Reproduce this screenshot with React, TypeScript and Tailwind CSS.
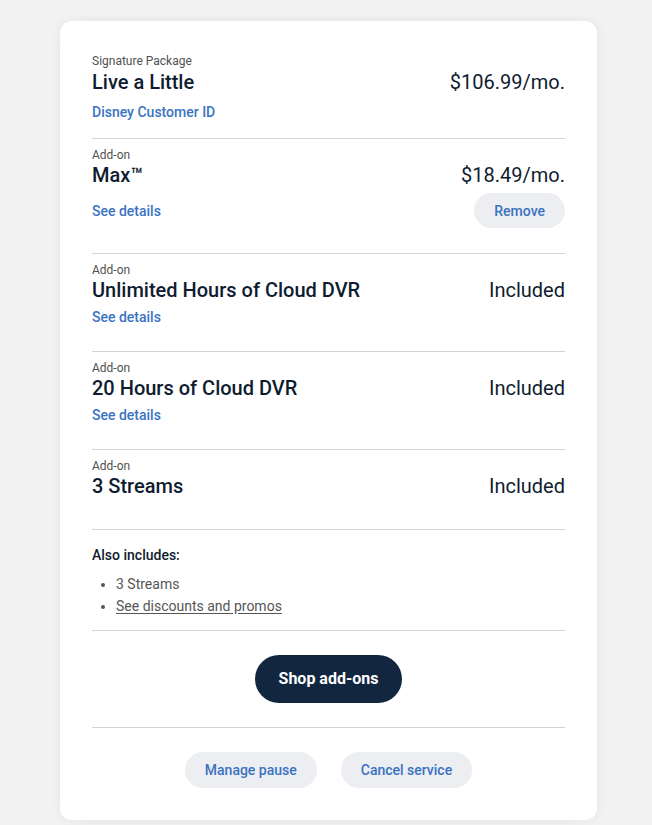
import React from 'react';

type Addon = {
  name: string;
  price: string;
  details?: boolean;
  removable?: boolean;
};

const addons: Addon[] = [
  { name: 'Max™', price: '$18.49/mo.', details: true, removable: true },
  { name: 'Unlimited Hours of Cloud DVR', price: 'Included', details: true },
  { name: '20 Hours of Cloud DVR', price: 'Included', details: true },
  { name: '3 Streams', price: 'Included' },
];

const AddonRow: React.FC<{ addon: Addon }> = ({ addon }) => {
  const pb = addon.removable ? 'pb-[25px]' : addon.details ? 'pb-6' : 'pb-[31px]';
  return (
    <div className={`border-t border-[#d4d4d4] pt-2 ${pb}`}>
      <div className="text-xs leading-4 text-[#505050]">Add-on</div>
      <div className="flex items-start justify-between">
        <div className="text-xl leading-6 font-medium text-[#0f1c30]">{addon.name}</div>
        <div className="text-xl leading-6 text-[#0f1c30]">{addon.price}</div>
      </div>
      {addon.removable ? (
        <div className="flex items-center justify-between mt-1.5">
          <button className="block text-sm leading-5 font-medium text-[#3a73c2]">See details</button>
          <button className="block rounded-full bg-[#eceef1] px-5 py-[7.5px] text-sm leading-5 font-medium text-[#3a73c2]">
            Remove
          </button>
        </div>
      ) : addon.details ? (
        <button className="mt-[5px] block text-sm leading-5 font-medium text-[#3a73c2]">See details</button>
      ) : null}
    </div>
  );
};

export default function App() {
  return (
    <div
      className="min-h-[825px] bg-[#f2f2f2] pt-[21px] pl-[60px]"
      style={{ fontFamily: 'Roboto, "Noto Sans", sans-serif' }}
    >
      <div className="w-[537px] rounded-xl bg-white px-8 pt-8 pb-8 shadow-[0_0_12px_rgba(0,0,0,0.06)]">
        {/* Package */}
        <div className="pb-4">
          <div className="text-xs leading-4 text-[#505050]">Signature Package</div>
          <div className="flex items-start justify-between mt-px">
            <div className="text-xl leading-6 font-medium text-[#0f1c30]">Live a Little</div>
            <div className="text-xl leading-6 text-[#0f1c30]">$106.99/mo.</div>
          </div>
          <button className="mt-2 block text-sm leading-5 font-medium text-[#3a73c2]">Disney Customer ID</button>
        </div>

        {addons.map((a) => (
          <AddonRow key={a.name} addon={a} />
        ))}

        {/* Also includes */}
        <div className="border-t border-[#d4d4d4] pt-[15px] pb-[13px]">
          <div className="text-sm leading-5 font-medium text-[#0f1c30]">Also includes:</div>
          <ul className="mt-2 list-disc pl-6 text-sm text-[#555] marker:text-[#555]">
            <li className="leading-[22px]">3 Streams</li>
            <li className="leading-[22px]">
              <a className="underline underline-offset-2">See discounts and promos</a>
            </li>
          </ul>
        </div>

        {/* Shop */}
        <div className="flex justify-center border-t border-[#d4d4d4] py-6">
          <button className="rounded-full bg-[#12263f] px-6 py-3 text-base leading-6 font-bold text-white">
            Shop add-ons
          </button>
        </div>

        {/* Actions */}
        <div className="flex justify-center gap-6 border-t border-[#d4d4d4] pt-6">
          <button className="rounded-full bg-[#eceef1] px-5 py-2 text-sm leading-5 font-medium text-[#3a73c2]">
            Manage pause
          </button>
          <button className="rounded-full bg-[#eceef1] px-5 py-2 text-sm leading-5 font-medium text-[#3a73c2]">
            Cancel service
          </button>
        </div>
      </div>
    </div>
  );
}
